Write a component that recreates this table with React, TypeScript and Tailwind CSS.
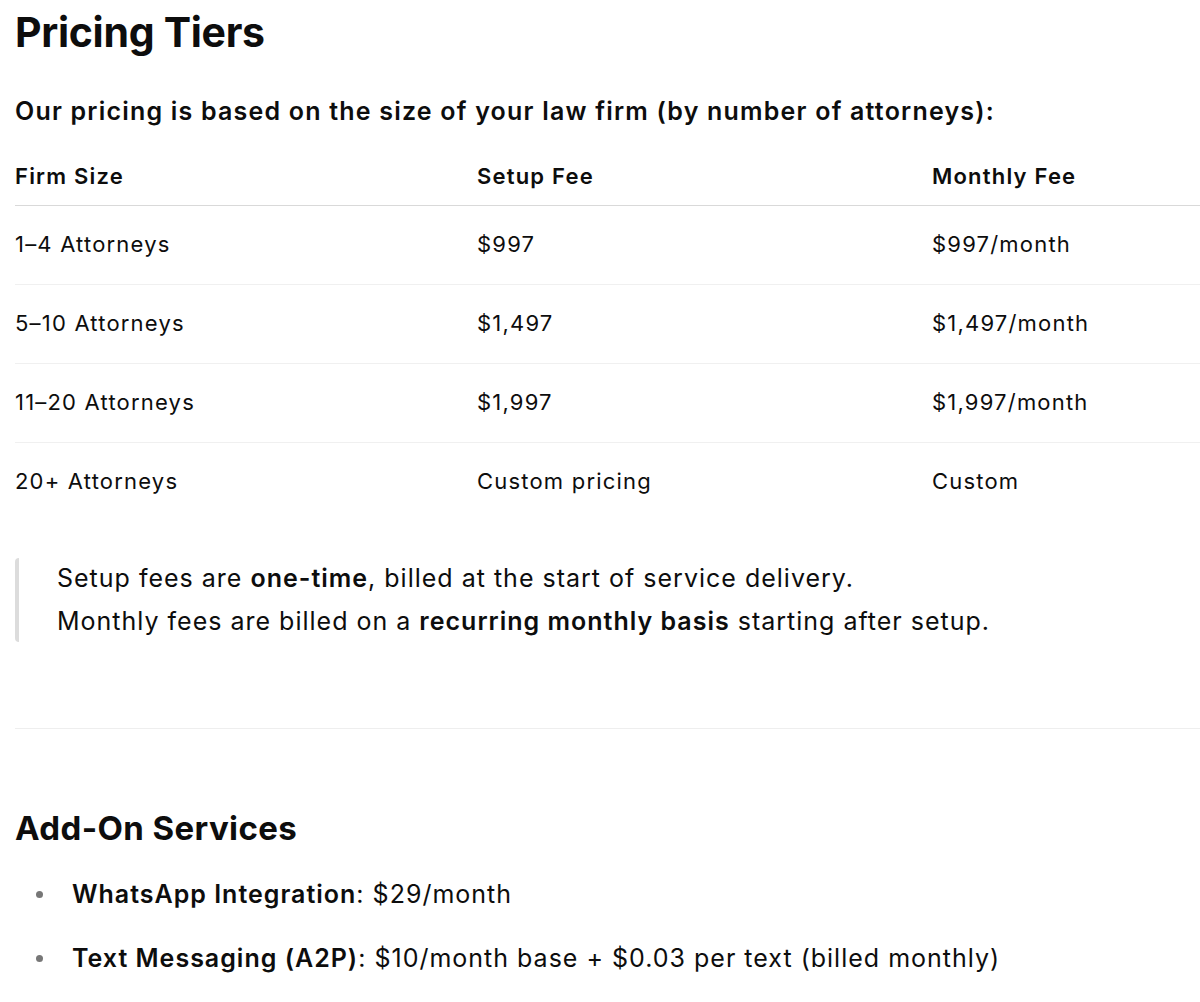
import React from "react";

const rows = [
  ["1–4 Attorneys", "$997", "$997/month"],
  ["5–10 Attorneys", "$1,497", "$1,497/month"],
  ["11–20 Attorneys", "$1,997", "$1,997/month"],
  ["20+ Attorneys", "Custom pricing", "Custom"],
];

function Bullet() {
  return (
    <span className="w-[57px] shrink-0 flex justify-start pl-[21px]">
      <span className="w-[7px] h-[7px] rounded-full bg-[#777777]" />
    </span>
  );
}

export default function App() {
  return (
    <div
      className="w-[1200px] h-[1002px] overflow-hidden bg-white text-[#0d0d0d]"
      style={{ fontFamily: "Inter, 'Noto Sans', sans-serif" }}
    >
      <div className="pl-[15px] w-[1500px]">
        <h1 className="text-[41px] font-bold leading-[48px] tracking-[-0.3px] pt-[8px]">Pricing Tiers</h1>
        <p className="text-[25px] font-semibold leading-[32px] tracking-[1.2px] mt-[39px]">
          Our pricing is based on the size of your law firm (by number of attorneys):
        </p>
        <table className="mt-[22px] w-[1400px] text-[22px] tracking-[1.2px] border-collapse">
          <thead>
            <tr className="border-b border-[#d9d9d9]">
              <th className="text-left font-semibold w-[462px] h-[56px]">Firm Size</th>
              <th className="text-left font-semibold w-[455px]">Setup Fee</th>
              <th className="text-left font-semibold">Monthly Fee</th>
            </tr>
          </thead>
          <tbody>
            {rows.map((r, i) => (
              <tr key={i} className={i < rows.length - 1 ? "border-b border-[#f0f0f0]" : ""}>
                <td className="h-[79px] font-normal">{r[0]}</td>
                <td>{r[1]}</td>
                <td>{r[2]}</td>
              </tr>
            ))}
          </tbody>
        </table>
        <div className="mt-[37px] border-l-[4px] border-[#dcdcdc] rounded-sm pl-[38px] text-[25px] leading-[41px] tracking-[1px]">
          <p>
            Setup fees are <b className="font-semibold">one-time</b>, billed at the start of service delivery.
          </p>
          <p className="mt-[2px]">
            Monthly fees are billed on a <b className="font-semibold">recurring monthly basis</b> starting after setup.
          </p>
        </div>
        <hr className="mt-[86px] border-0 border-t border-[#eeeeee] w-[1185px]" />
        <h2 className="text-[33px] font-bold leading-[40px] tracking-[0.4px] mt-[79px]">Add-On Services</h2>
        <ul className="mt-[30px] text-[25px] leading-[32px] tracking-[1px]">
          <li className="flex items-center h-[32px]">
            <Bullet />
            <span>
              <b className="font-semibold">WhatsApp Integration</b>: $29/month
            </span>
          </li>
          <li className="flex items-center h-[32px] mt-[32px]">
            <Bullet />
            <span>
              <b className="font-semibold">Text Messaging (A2P)</b>: $10/month base + $0.03 per text (billed monthly)
            </span>
          </li>
        </ul>
      </div>
    </div>
  );
}
